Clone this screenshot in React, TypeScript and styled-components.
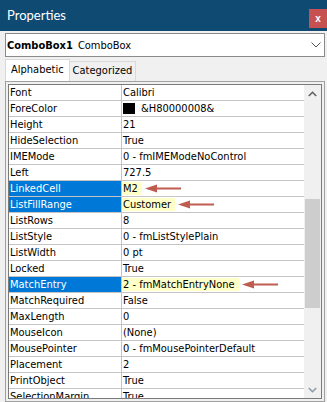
import React from "react";
import styled, { createGlobalStyle } from "styled-components";

const Global = createGlobalStyle`
  html, body { margin: 0; padding: 0; }
  body {
    width: 327px; height: 402px; overflow: hidden;
    background: #f0f0f0;
    font-family: "DejaVu Sans Condensed", "DejaVu Sans", sans-serif;
  }
`;

const Window = styled.div`
  width: 327px;
  height: 402px;
  display: flex;
  flex-direction: column;
  background: #f0f0f0;
`;

const TitleBar = styled.div`
  height: 31px;
  flex: none;
  background: #0f4a73;
  display: flex;
  justify-content: space-between;
  align-items: flex-start;
`;

const Title = styled.div`
  color: #ffffff;
  font-family: "Lato", "Noto Sans", sans-serif;
  font-size: 13px;
  line-height: 31px;
  padding-left: 7px;
`;

const Close = styled.div`
  margin-top: 9px;
  width: 18px;
  height: 19px;
  background: #c75050;
  color: #ffffff;
  font-family: "Liberation Sans", sans-serif;
  font-weight: bold;
  font-size: 10px;
  display: flex;
  align-items: center;
  justify-content: center;
`;

const Body = styled.div`
  flex: 1;
  display: flex;
  flex-direction: column;
  padding: 2px 2px 0 5px;
`;

const Combo = styled.div`
  height: 24px;
  box-sizing: border-box;
  border: 1px solid #8a8a8a;
  background: #ffffff;
  display: flex;
  align-items: center;
  justify-content: space-between;
  padding: 0 3px 0 1px;
  font-size: 11px;
  color: #000;
`;

const ComboName = styled.b`
  font-weight: bold;
  margin-right: 5px;
`;

const TabRow = styled.div`
  margin-top: 2px;
  height: 22px;
  display: flex;
  align-items: flex-end;
`;

const Tab = styled.div<{ $active?: boolean }>`
  box-sizing: border-box;
  height: ${(p) => (p.$active ? "22px" : "20px")};
  padding: 0 ${(p) => (p.$active ? "5px" : "3px")};
  background: ${(p) => (p.$active ? "#ffffff" : "#f0f0f0")};
  border: 1px solid #d9d9d9;
  border-bottom: none;
  ${(p) => (p.$active ? "" : "border-left: none;")}
  font-size: 11px;
  line-height: ${(p) => (p.$active ? "19px" : "18px")};
  color: #000;
`;

const Frame = styled.div`
  width: 320px;
  height: 321px;
  box-sizing: border-box;
  border: 1px solid #a0a0a0;
  padding: 2px;
  display: flex;
`;

const Inner = styled.div`
  flex: 1;
  border: 1px solid #7a7a7a;
  display: flex;
  overflow: hidden;
  background: #ffffff;
`;

const Table = styled.div`
  flex: 1;
  display: flex;
  flex-direction: column;
  overflow: hidden;
`;

const Row = styled.div`
  flex: none;
  height: 16px;
  box-sizing: border-box;
  border-bottom: 1px solid #c4c4c4;
  display: grid;
  grid-template-columns: 113px 1fr;
  font-size: 11px;
  line-height: 15px;
  white-space: nowrap;
`;

const Label = styled.div<{ $selected?: boolean }>`
  border-right: 1px solid #c4c4c4;
  padding-left: 1px;
  background: ${(p) => (p.$selected ? "#0078d7" : "transparent")};
  color: ${(p) => (p.$selected ? "#ffffff" : "#000000")};
  overflow: hidden;
`;

const Value = styled.div`
  display: flex;
  align-items: center;
  color: #000;
  overflow: hidden;
`;

const ValueText = styled.span<{ $mark?: boolean }>`
  display: inline-block;
  padding: 0 ${(p) => (p.$mark ? "4px" : "0")} 0 1px;
  line-height: 13px;
  background: ${(p) => (p.$mark ? "#ffffc8" : "transparent")};
`;

const Swatch = styled.span`
  display: inline-block;
  width: 12px;
  height: 11px;
  background: #000;
  margin: 0 5px 0 1px;
`;

const ArrowWrap = styled.span`
  display: inline-flex;
  margin-left: 3px;
`;

const Scroll = styled.div`
  width: 17px;
  flex: none;
  background: #f0f0f0;
  display: flex;
  flex-direction: column;
`;

const ScrollBtn = styled.div`
  height: 17px;
  flex: none;
  display: flex;
  align-items: center;
  justify-content: center;
`;

const Track = styled.div`
  flex: 1;
  display: flex;
  flex-direction: column;
`;

const Thumb = styled.div`
  margin: 97px 1px 0 1px;
  height: 109px;
  background: #cdcdcd;
`;

const Arrow = () => (
  <ArrowWrap>
    <svg width="36" height="9" viewBox="0 0 36 9">
      <polygon points="0,4.5 12,0.5 12,8.5" fill="#bf5b4f" />
      <rect x="11" y="3.5" width="25" height="2" fill="#bf5b4f" />
    </svg>
  </ArrowWrap>
);

type Prop = {
  name: string;
  value: string;
  selected?: boolean;
  swatch?: boolean;
};

const rows: Prop[] = [
  { name: "Font", value: "Calibri" },
  { name: "ForeColor", value: "&H80000008&", swatch: true },
  { name: "Height", value: "21" },
  { name: "HideSelection", value: "True" },
  { name: "IMEMode", value: "0 - fmIMEModeNoControl" },
  { name: "Left", value: "727.5" },
  { name: "LinkedCell", value: "M2", selected: true },
  { name: "ListFillRange", value: "Customer", selected: true },
  { name: "ListRows", value: "8" },
  { name: "ListStyle", value: "0 - fmListStylePlain" },
  { name: "ListWidth", value: "0 pt" },
  { name: "Locked", value: "True" },
  { name: "MatchEntry", value: "2 - fmMatchEntryNone", selected: true },
  { name: "MatchRequired", value: "False" },
  { name: "MaxLength", value: "0" },
  { name: "MouseIcon", value: "(None)" },
  { name: "MousePointer", value: "0 - fmMousePointerDefault" },
  { name: "Placement", value: "2" },
  { name: "PrintObject", value: "True" },
  { name: "SelectionMargin", value: "True" },
];

export default function App() {
  return (
    <>
      <Global />
      <Window>
        <TitleBar>
          <Title>Properties</Title>
          <Close>x</Close>
        </TitleBar>
        <Body>
          <Combo>
            <span>
              <ComboName>ComboBox1</ComboName>ComboBox
            </span>
            <svg width="10" height="6" viewBox="0 0 10 6">
              <polyline points="0.5,0.5 5,5 9.5,0.5" fill="none" stroke="#555" strokeWidth="1" />
            </svg>
          </Combo>
          <TabRow>
            <Tab $active>Alphabetic</Tab>
            <Tab>Categorized</Tab>
          </TabRow>
          <Frame>
            <Inner>
              <Table>
                {rows.map((r) => (
                  <Row key={r.name}>
                    <Label $selected={r.selected}>{r.name}</Label>
                    <Value>
                      {r.swatch && <Swatch />}
                      <ValueText $mark={r.selected}>{r.value}</ValueText>
                      {r.selected && <Arrow />}
                    </Value>
                  </Row>
                ))}
              </Table>
              <Scroll>
                <ScrollBtn>
                  <svg width="9" height="6" viewBox="0 0 9 6">
                    <polyline points="0.8,5 4.5,1.3 8.2,5" fill="none" stroke="#606060" strokeWidth="1.6" />
                  </svg>
                </ScrollBtn>
                <Track>
                  <Thumb />
                </Track>
                <ScrollBtn>
                  <svg width="9" height="6" viewBox="0 0 9 6">
                    <polyline points="0.8,1 4.5,4.7 8.2,1" fill="none" stroke="#8a9aa8" strokeWidth="1.6" />
                  </svg>
                </ScrollBtn>
              </Scroll>
            </Inner>
          </Frame>
        </Body>
      </Window>
    </>
  );
}
